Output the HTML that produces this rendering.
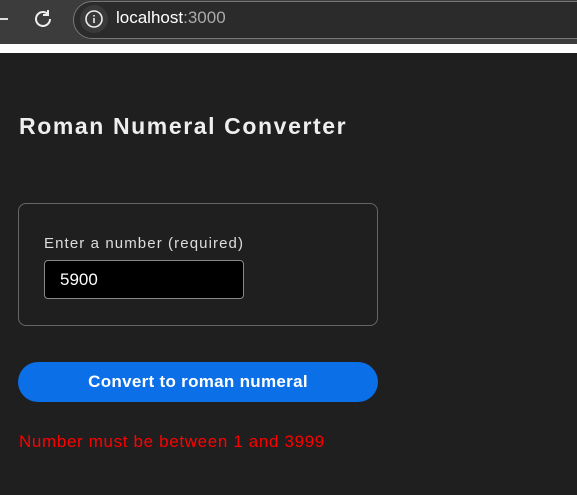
<!DOCTYPE html>
<html><head><style>
body{margin:0;width:577px;height:495px;overflow:hidden;background:#1f1f1f;font-family:"Liberation Sans",sans-serif;position:relative}
.bar{position:absolute;left:0;top:0;width:577px;height:44px;background:#3c3c3c}
.white{position:absolute;left:0;top:44px;width:577px;height:9px;background:#fff}
.url{position:absolute;left:73px;top:1px;width:530px;height:36px;border:1px solid #777;border-radius:19px;background:#2b2b2b}
.info{position:absolute;left:80px;top:5px;width:28px;height:28px;border-radius:50%;background:#3a3a3a}
.urltxt{position:absolute;left:116px;top:8px;font-size:17px;color:#fff}
.urltxt span{color:#aaa}
h1{position:absolute;left:19px;top:113px;margin:0;font-size:23px;letter-spacing:1.6px;color:#eee;font-weight:bold}
.card{position:absolute;left:18px;top:203px;width:358px;height:121px;border:1px solid #666;border-radius:8px}
.lbl{position:absolute;left:44px;top:235px;font-size:15px;letter-spacing:1.1px;color:#ddd}
.inp{position:absolute;left:44px;top:260px;width:200px;height:39px;border:1px solid #888;border-radius:4px;background:#000;color:#fff;font-size:17px;box-sizing:border-box;padding:9px 0 0 15px}
.btn{position:absolute;left:18px;top:362px;width:360px;height:40px;border-radius:20px;background:#0b6fe8;color:#fff;font-weight:bold;font-size:17px;letter-spacing:0.3px;text-align:center;line-height:40px}
.err{position:absolute;left:19px;top:432px;color:#f00;font-size:17px;letter-spacing:0.65px}
</style></head><body>
<div class="bar"></div>
<div style="position:absolute;left:0;top:18px;width:8px;height:2px;background:#ddd"></div>
<svg style="position:absolute;left:32px;top:8px" width="22" height="22" viewBox="0 0 22 22"><path d="M18 11a7 7 0 1 1-2.5-5.4" fill="none" stroke="#eee" stroke-width="2"/><path d="M16 2v5h-5" fill="none" stroke="#eee" stroke-width="2"/></svg>
<div class="url"></div>
<div class="info"></div>
<svg style="position:absolute;left:84px;top:9px" width="20" height="20" viewBox="0 0 20 20"><circle cx="10" cy="10" r="8" fill="none" stroke="#eee" stroke-width="1.6"/><rect x="9.2" y="9" width="1.6" height="5" fill="#eee"/><rect x="9.2" y="6" width="1.6" height="1.6" fill="#eee"/></svg>
<div class="urltxt">localhost<span>:3000</span></div>
<div class="white"></div>
<h1>Roman Numeral Converter</h1>
<div class="card"></div>
<div class="lbl">Enter a number (required)</div>
<div class="inp">5900</div>
<div class="btn">Convert to roman numeral</div>
<div class="err">Number must be between 1 and 3999</div>
</body></html>
